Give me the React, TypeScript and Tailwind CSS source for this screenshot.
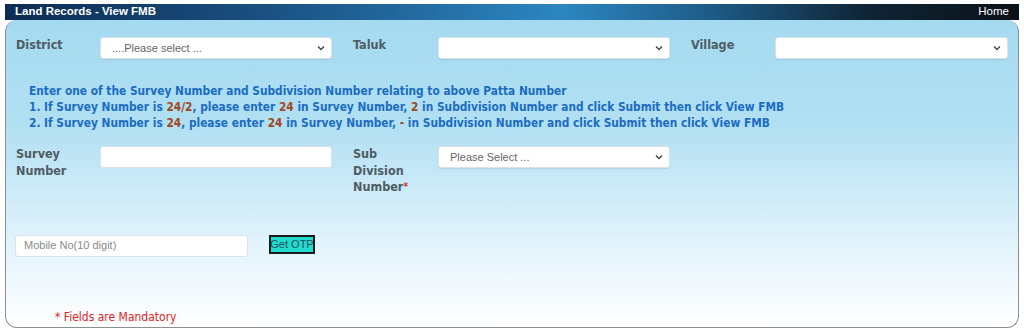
import React from "react";

const Chevron = () => (
  <svg width="8" height="6" viewBox="0 0 8 6" className="absolute right-[6px] top-1/2 -translate-y-1/2">
    <path d="M1 1.5 L4 4.5 L7 1.5" fill="none" stroke="#444" strokeWidth="1.4" />
  </svg>
);

const Select = ({ text = "", w = "w-[232px]" }: { text?: string; w?: string }) => (
  <div className={`relative ${w} h-[22px] bg-white rounded-[3px] border border-[#d8e2e8] shadow-[0_1px_1px_rgba(0,0,0,0.08)] flex items-center pl-[11px] text-[11px] text-[#666] font-['Liberation_Sans',Arial,sans-serif] shrink-0`}>
    {text}
    <Chevron />
  </div>
);

const Label = ({ children, w = "w-[84px]" }: { children: React.ReactNode; w?: string }) => (
  <div className={`${w} shrink-0 text-[12.5px] leading-[16.5px] font-bold text-[#4f5c64] font-['DejaVu_Sans_Condensed','DejaVu_Sans',Verdana,sans-serif]`}>
    {children}
  </div>
);

const N = ({ children }: { children: React.ReactNode }) => <span className="text-[#a3461c]">{children}</span>;

export default function App() {
  return (
    <div className="w-[1024px] h-[335px] bg-white pt-[4px] px-[5px]">
      <div className="h-[16px] bg-[linear-gradient(90deg,#0c2c53_0%,#1a4f80_25%,#2c86c0_55%,#1d5a85_70%,#0f2435_85%,#0b1118_100%)] flex items-center justify-between pl-[10px] pr-[10px] text-white text-[11.5px] font-['Liberation_Sans',Arial,sans-serif]">
        <span className="font-bold">Land Records - View FMB</span>
        <span>Home</span>
      </div>
      <div className="h-[308px] rounded-[12px] border border-[#8a8f93] border-t-0 bg-[linear-gradient(180deg,#a4daf0_0%,#b2e0f3_35%,#dff2fb_70%,#ffffff_100%)] pt-[17px] relative">
        <div className="flex items-start pl-[10px]">
          <Label>District</Label>
          <Select text="....Please select ..." />
          <div className="w-[21px]" />
          <Label w="w-[85px]">Taluk</Label>
          <Select />
          <div className="w-[21px]" />
          <Label>Village</Label>
          <Select w="w-[233px]" />
        </div>
        <div className="mt-[24px] pl-[23px] text-[11.8px] leading-[16px] font-bold text-[#1b6cc2] font-['DejaVu_Sans_Condensed','DejaVu_Sans',Verdana,sans-serif]">
          <div>Enter one of the Survey Number and Subdivision Number relating to above Patta Number</div>
          <div>1. If Survey Number is <N>24/2</N>, please enter <N>24</N> in Survey Number, <N>2</N> in Subdivision Number and click Submit then click View FMB</div>
          <div>2. If Survey Number is <N>24</N>, please enter <N>24</N> in Survey Number, <N>-</N> in Subdivision Number and click Submit then click View FMB</div>
        </div>
        <div className="flex items-start pl-[10px] mt-[15px]">
          <Label>Survey<br />Number</Label>
          <div className="w-[232px] h-[22px] bg-white rounded-[3px] border border-[#d8e2e8] shrink-0" />
          <div className="w-[21px]" />
          <Label w="w-[85px]">Sub<br />Division<br />Number<span className="text-[#e0302a] text-[10px] align-top">*</span></Label>
          <Select text="Please Select ..." />
        </div>
        <div className="flex items-start pl-[9px] mt-[39px]">
          <div className="w-[233px] h-[22px] bg-white rounded-[3px] border border-[#d8e2e8] flex items-center pl-[8px] text-[11px] text-[#8a8a8a] font-['Liberation_Sans',Arial,sans-serif]">
            Mobile No(10 digit)
          </div>
          <div className="ml-[21px] w-[46px] h-[19px] bg-[#22dccb] border-2 border-[#1a1a1a] flex items-center justify-center whitespace-nowrap text-[11px] leading-[14px] text-[#1f4f6a] font-['Liberation_Sans',Arial,sans-serif]">
            Get OTP
          </div>
        </div>
        <div className="absolute left-[49px] bottom-[1px] text-[12px] text-[#e02424] font-['DejaVu_Sans_Condensed','DejaVu_Sans',Verdana,sans-serif]">
          * Fields are Mandatory
        </div>
      </div>
    </div>
  );
}
